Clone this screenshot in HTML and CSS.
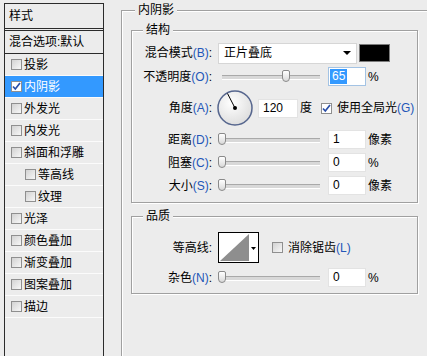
FILE: index.html
```html
<!DOCTYPE html>
<html lang="zh-CN">
<head>
<meta charset="utf-8">
<title>图层样式 - 内阴影</title>
<link rel="stylesheet" href="styles.css">
</head>
<body>
<aside class="sidebar">
  <div class="side-head">样式</div>
  <div class="side-blend">混合选项:默认</div>
  <ul class="side-list">
    <li class="side-item"><span class="cb"></span>投影</li>
    <li class="side-item is-active"><span class="cb is-checked"><svg viewBox="0 0 11 11" width="11" height="11"><path d="M2 5.5 L4.3 8 L9 2" fill="none" stroke="#2a4fa8" stroke-width="1.7"/></svg></span>内阴影</li>
    <li class="side-item"><span class="cb"></span>外发光</li>
    <li class="side-item"><span class="cb"></span>内发光</li>
    <li class="side-item"><span class="cb"></span>斜面和浮雕</li>
    <li class="side-item is-sub"><span class="cb"></span>等高线</li>
    <li class="side-item is-sub"><span class="cb"></span>纹理</li>
    <li class="side-item"><span class="cb"></span>光泽</li>
    <li class="side-item"><span class="cb"></span>颜色叠加</li>
    <li class="side-item"><span class="cb"></span>渐变叠加</li>
    <li class="side-item"><span class="cb"></span>图案叠加</li>
    <li class="side-item"><span class="cb"></span>描边</li>
  </ul>
</aside>
<main class="panel">
  <fieldset class="group group-outer">
    <legend>内阴影</legend>
    <fieldset class="group group-struct">
      <legend>结构</legend>
      <div class="rows">
        <div class="row row-mode">
          <span class="lbl">混合模式<span class="mn">(B)</span>:</span>
          <div class="select"><span>正片叠底</span><span class="select-arrow"></span></div>
          <span class="swatch"></span>
        </div>
        <div class="row">
          <span class="lbl">不透明度<span class="mn">(O)</span>:</span>
          <div class="slider"><span class="thumb" style="left:64px"></span></div>
          <span class="num is-focus"><span class="sel">65</span></span>
          <span class="unit">%</span>
        </div>
        <div class="row row-angle">
          <span class="lbl">角度<span class="mn">(A)</span>:</span>
          <svg class="dial" viewBox="0 0 36 36" width="36" height="36">
            <defs>
              <radialGradient id="dialfill" cx="0.4" cy="0.35" r="0.7">
                <stop offset="0" stop-color="#ffffff"/>
                <stop offset="1" stop-color="#dcdcdc"/>
              </radialGradient>
            </defs>
            <circle cx="18" cy="18" r="17" fill="url(#dialfill)" stroke="#56668e" stroke-width="1.5"/>
            <line x1="18" y1="18" x2="10.5" y2="3.5" stroke="#000" stroke-width="1"/>
            <circle cx="18" cy="18" r="2" fill="#000"/>
          </svg>
          <span class="num num-wide">120</span>
          <span class="unit">度</span>
          <span class="cb is-checked cb-global"><svg viewBox="0 0 11 11" width="11" height="11"><path d="M2 5.5 L4.3 8 L9 2" fill="none" stroke="#2a4fa8" stroke-width="1.7"/></svg></span>
          <span class="cb-text">使用全局光<span class="mn">(G)</span></span>
        </div>
        <div class="row">
          <span class="lbl">距离<span class="mn">(D)</span>:</span>
          <div class="slider"><span class="thumb" style="left:0px"></span></div>
          <span class="num">1</span>
          <span class="unit">像素</span>
        </div>
        <div class="row">
          <span class="lbl">阻塞<span class="mn">(C)</span>:</span>
          <div class="slider"><span class="thumb" style="left:0px"></span></div>
          <span class="num">0</span>
          <span class="unit">%</span>
        </div>
        <div class="row">
          <span class="lbl">大小<span class="mn">(S)</span>:</span>
          <div class="slider"><span class="thumb" style="left:0px"></span></div>
          <span class="num">0</span>
          <span class="unit">像素</span>
        </div>
      </div>
    </fieldset>
    <fieldset class="group group-quality">
      <legend>品质</legend>
      <div class="rows rows-quality">
        <div class="row row-contour">
          <span class="lbl">等高线:</span>
          <svg class="contour" viewBox="0 0 41 31" width="41" height="31">
            <rect x="0.5" y="0.5" width="40" height="30" fill="#fff" stroke="#000"/>
            <polygon points="2,29 31,2 31,29" fill="#8e8e8e"/>
            <polygon points="33,15 38,15 35.5,18" fill="#000"/>
          </svg>
          <span class="cb cb-anti"></span>
          <span class="cb-text">消除锯齿<span class="mn">(L)</span></span>
        </div>
        <div class="row">
          <span class="lbl">杂色<span class="mn">(N)</span>:</span>
          <div class="slider"><span class="thumb" style="left:0px"></span></div>
          <span class="num">0</span>
          <span class="unit">%</span>
        </div>
      </div>
    </fieldset>
  </fieldset>
</main>
</body>
</html>
```

FILE: styles.css
```css
* {
  box-sizing: border-box;
}

html, body {
  margin: 0;
  padding: 0;
}

body {
  background: #ececec;
  width: 427px;
  height: 356px;
  overflow: hidden;
  display: flex;
  align-items: flex-start;
  font-family: "Liberation Sans", "Noto Sans CJK SC", sans-serif;
  font-size: 12px;
  line-height: 1;
  color: #000;
}

/* ---------- left style list ---------- */
.sidebar {
  flex: none;
  width: 100px;
  height: 353px;
  margin: 3px 0 0 4px;
  border: 1px solid #2b2b2b;
  border-bottom: none;
  overflow: hidden;
}

.side-head {
  height: 25px;
  line-height: 24px;
  padding-left: 4px;
  border-bottom: 1px solid #2b2b2b;
}

.side-blend {
  margin-top: 1px;
  height: 24px;
  line-height: 22px;
  padding-left: 4px;
  border-top: 1px solid #2b2b2b;
  border-bottom: 1px solid #2b2b2b;
}

.side-list {
  list-style: none;
  margin: 0;
  padding: 0;
}

.side-item {
  display: flex;
  align-items: center;
  gap: 2px;
  height: 22px;
  padding-left: 6px;
  border-bottom: 1px solid #fbfbfb;
  white-space: nowrap;
}

.side-item.is-sub {
  padding-left: 20px;
}

.side-item.is-active {
  background: #3399ff;
  color: #fff;
}

/* ---------- checkbox ---------- */
.cb {
  flex: none;
  display: block;
  width: 11px;
  height: 11px;
  border: 1px solid #8f8f8f;
  background: linear-gradient(135deg, #d2d2d2, #f7f7f7);
  position: relative;
}

.cb.is-checked {
  background: #fff;
}

.cb svg {
  position: absolute;
  left: -1px;
  top: -1px;
}

.cb-global {
  margin-left: 9px;
}

.cb-anti {
  margin-left: 13px;
}

.cb-text {
  margin-left: 5px;
  white-space: nowrap;
}

.mn {
  color: #2356b8;
}

/* ---------- right panel ---------- */
.panel {
  flex: 1;
  min-width: 0;
  height: 356px;
  overflow: hidden;
  padding: 4px 0 0 17px;
}

.group {
  margin: 0;
  min-width: 0;
  border: 1px solid #a0a0a0;
  box-shadow: inset 1px 1px 0 #fff, 1px 1px 0 #fff;
}

.group legend {
  height: 13px;
  line-height: 13px;
  padding: 0 3px;
  background: #ececec;
  white-space: nowrap;
}

.group-outer {
  width: 340px;
  min-height: 420px;
  padding: 0 0 0 9px;
}

.group-outer > legend {
  margin-left: 4px;
}

.group-struct,
.group-quality {
  width: 287px;
  margin-top: 7px;
}

.group-struct > legend,
.group-quality > legend {
  margin-left: 11px;
}

.group-struct {
  padding: 6px 0 7px 0;
}

.group-quality {
  padding: 9px 0 6px 0;
}

.rows {
  display: flex;
  flex-direction: column;
  gap: 4px;
}

.rows-quality {
  gap: 5px;
}

.row {
  display: flex;
  align-items: center;
  height: 19px;
}

.row-mode {
  height: 20px;
}

.row-angle {
  height: 36px;
}

.row-contour {
  height: 31px;
}

.lbl {
  flex: none;
  width: 80px;
  text-align: right;
  white-space: nowrap;
}

/* dropdown */
.select {
  flex: none;
  display: flex;
  align-items: center;
  justify-content: space-between;
  width: 139px;
  height: 21px;
  margin-left: 6px;
  padding: 0 5px 0 5px;
  background: #fff;
  border: 1px solid #d6d6d6;
}

.select-arrow {
  width: 0;
  height: 0;
  border-left: 4px solid transparent;
  border-right: 4px solid transparent;
  border-top: 4px solid #000;
}

.swatch {
  flex: none;
  width: 31px;
  height: 18px;
  margin-left: 2px;
  background: #000;
  border: 1px solid #7c7c7c;
}

/* slider */
.slider {
  flex: none;
  position: relative;
  width: 98px;
  height: 19px;
  margin-left: 10px;
}

.slider::before {
  content: "";
  position: absolute;
  left: 0;
  right: 0;
  top: 8px;
  height: 3px;
  background: #d8d8d8;
  border-top: 1px solid #a9a9a9;
  border-bottom: 1px solid #fff;
}

.thumb {
  position: absolute;
  top: 3px;
  width: 8px;
  height: 12px;
  margin-left: -4px;
  border: 1px solid #8a8a8a;
  border-radius: 2px 2px 4px 4px;
  background: linear-gradient(#ffffff, #d9d9d9);
}

/* numeric input */
.num {
  flex: none;
  display: block;
  width: 38px;
  height: 19px;
  margin-left: 8px;
  padding-left: 4px;
  line-height: 17px;
  background: #fff;
  border: 1px solid #e3e3e3;
}

.num.is-focus {
  border-color: #a3c3e4;
  padding-left: 1px;
  padding-top: 1px;
}

.sel {
  display: inline-block;
  height: 15px;
  line-height: 15px;
  padding: 0 2px;
  background: #3399ff;
  color: #fff;
  vertical-align: top;
}

.num-wide {
  width: 40px;
  margin-left: 5px;
}

.unit {
  margin-left: 2px;
  white-space: nowrap;
}

.dial {
  flex: none;
  margin-left: 5px;
}

.contour {
  flex: none;
  margin-left: 6px;
}
```
